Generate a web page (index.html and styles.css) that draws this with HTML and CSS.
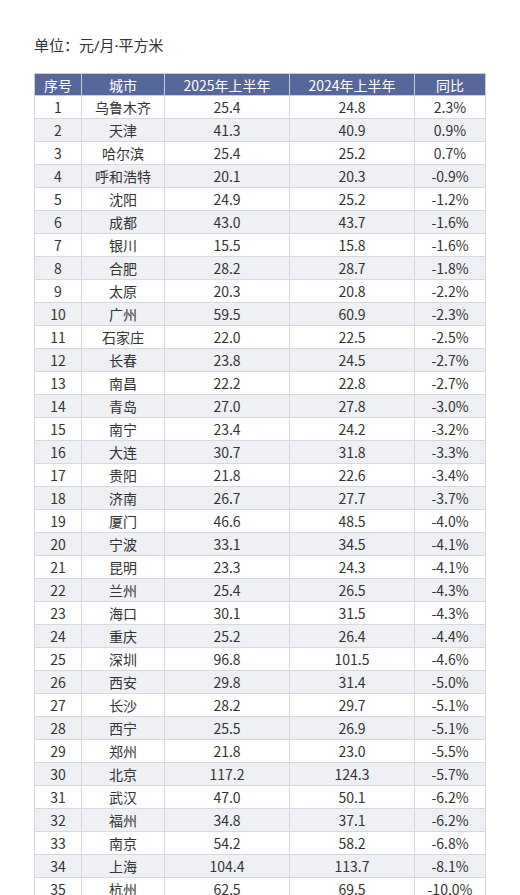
FILE: index.html
```html
<!DOCTYPE html>
<html lang="zh">
<head>
<meta charset="utf-8">
<link rel="stylesheet" href="styles.css">
</head>
<body>
<div class="page">
<div class="unit">单位：元/月·平方米</div>
<table class="rent">
<colgroup><col class="c1"><col class="c2"><col class="c3"><col class="c4"><col class="c5"></colgroup>
<thead><tr><th>序号</th><th>城市</th><th>2025年上半年</th><th>2024年上半年</th><th>同比</th></tr></thead>
<tbody>
<tr><td>1</td><td>乌鲁木齐</td><td>25.4</td><td>24.8</td><td>2.3%</td></tr>
<tr><td>2</td><td>天津</td><td>41.3</td><td>40.9</td><td>0.9%</td></tr>
<tr><td>3</td><td>哈尔滨</td><td>25.4</td><td>25.2</td><td>0.7%</td></tr>
<tr><td>4</td><td>呼和浩特</td><td>20.1</td><td>20.3</td><td>-0.9%</td></tr>
<tr><td>5</td><td>沈阳</td><td>24.9</td><td>25.2</td><td>-1.2%</td></tr>
<tr><td>6</td><td>成都</td><td>43.0</td><td>43.7</td><td>-1.6%</td></tr>
<tr><td>7</td><td>银川</td><td>15.5</td><td>15.8</td><td>-1.6%</td></tr>
<tr><td>8</td><td>合肥</td><td>28.2</td><td>28.7</td><td>-1.8%</td></tr>
<tr><td>9</td><td>太原</td><td>20.3</td><td>20.8</td><td>-2.2%</td></tr>
<tr><td>10</td><td>广州</td><td>59.5</td><td>60.9</td><td>-2.3%</td></tr>
<tr><td>11</td><td>石家庄</td><td>22.0</td><td>22.5</td><td>-2.5%</td></tr>
<tr><td>12</td><td>长春</td><td>23.8</td><td>24.5</td><td>-2.7%</td></tr>
<tr><td>13</td><td>南昌</td><td>22.2</td><td>22.8</td><td>-2.7%</td></tr>
<tr><td>14</td><td>青岛</td><td>27.0</td><td>27.8</td><td>-3.0%</td></tr>
<tr><td>15</td><td>南宁</td><td>23.4</td><td>24.2</td><td>-3.2%</td></tr>
<tr><td>16</td><td>大连</td><td>30.7</td><td>31.8</td><td>-3.3%</td></tr>
<tr><td>17</td><td>贵阳</td><td>21.8</td><td>22.6</td><td>-3.4%</td></tr>
<tr><td>18</td><td>济南</td><td>26.7</td><td>27.7</td><td>-3.7%</td></tr>
<tr><td>19</td><td>厦门</td><td>46.6</td><td>48.5</td><td>-4.0%</td></tr>
<tr><td>20</td><td>宁波</td><td>33.1</td><td>34.5</td><td>-4.1%</td></tr>
<tr><td>21</td><td>昆明</td><td>23.3</td><td>24.3</td><td>-4.1%</td></tr>
<tr><td>22</td><td>兰州</td><td>25.4</td><td>26.5</td><td>-4.3%</td></tr>
<tr><td>23</td><td>海口</td><td>30.1</td><td>31.5</td><td>-4.3%</td></tr>
<tr><td>24</td><td>重庆</td><td>25.2</td><td>26.4</td><td>-4.4%</td></tr>
<tr><td>25</td><td>深圳</td><td>96.8</td><td>101.5</td><td>-4.6%</td></tr>
<tr><td>26</td><td>西安</td><td>29.8</td><td>31.4</td><td>-5.0%</td></tr>
<tr><td>27</td><td>长沙</td><td>28.2</td><td>29.7</td><td>-5.1%</td></tr>
<tr><td>28</td><td>西宁</td><td>25.5</td><td>26.9</td><td>-5.1%</td></tr>
<tr><td>29</td><td>郑州</td><td>21.8</td><td>23.0</td><td>-5.5%</td></tr>
<tr><td>30</td><td>北京</td><td>117.2</td><td>124.3</td><td>-5.7%</td></tr>
<tr><td>31</td><td>武汉</td><td>47.0</td><td>50.1</td><td>-6.2%</td></tr>
<tr><td>32</td><td>福州</td><td>34.8</td><td>37.1</td><td>-6.2%</td></tr>
<tr><td>33</td><td>南京</td><td>54.2</td><td>58.2</td><td>-6.8%</td></tr>
<tr><td>34</td><td>上海</td><td>104.4</td><td>113.7</td><td>-8.1%</td></tr>
<tr><td>35</td><td>杭州</td><td>62.5</td><td>69.5</td><td>-10.0%</td></tr>
</tbody>
</table>
</div>
</body>
</html>
```
FILE: styles.css
```css
html, body {
  margin: 0;
  padding: 0;
  background: #ffffff;
}
.page {
  padding: 35px 0 0 34px;
  font-family: "Noto Sans CJK SC", "Noto Sans", sans-serif;
  color: #333333;
}
.unit {
  font-family: "Noto Sans", "Noto Sans CJK SC", sans-serif;
  font-size: 15px;
  line-height: 20px;
  margin-bottom: 18px;
  color: #333333;
}
.rent {
  border-collapse: collapse;
  table-layout: fixed;
  width: 451px;
  font-size: 14px;
}
.c1 { width: 47px; }
.c2 { width: 83px; }
.c3 { width: 125px; }
.c4 { width: 125px; }
.c5 { width: 71px; }
.rent th, .rent td {
  border: 1px solid #d6d9df;
  text-align: center;
  padding: 0;
  height: 22px;
  line-height: 20px;
  font-weight: normal;
  white-space: nowrap;
}
.rent th {
  background: #58679a;
  color: #ffffff;
  border-color: #c9cdd8;
  height: 21px;
}
.rent tbody tr:nth-child(even) td {
  background: #eef0f4;
}
.rent td {
  color: #333333;
}
```
